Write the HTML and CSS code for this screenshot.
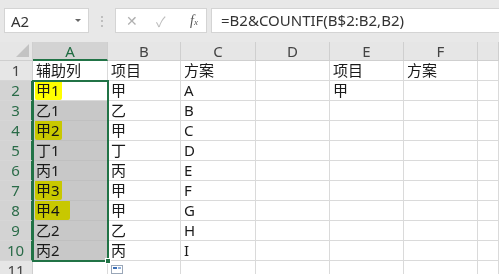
FILE: index.html
```html
<!DOCTYPE html>
<html lang="zh-CN">
<head>
  <meta charset="UTF-8">
  <title>Excel - 辅助列</title>
  <link rel="stylesheet" href="styles.css">
</head>
<body>
  <!-- Formula Bar -->
  <div class="toolbar">
    <div class="name-box">
      <span>A2</span>
      <span class="caret"></span>
    </div>
    <div class="grip">⋮</div>
    <div class="fx-buttons">
      <span class="btn-x">✕</span>
      <span class="btn-ok">✓</span>
      <span class="btn-fx"><i>f</i><small>x</small></span>
    </div>
    <div class="formula">=B2&amp;COUNTIF(B$2:B2,B2)</div>
  </div>

  <!-- Sheet -->
  <div class="sheet">
    <div class="grid">
      <div class="corner"><span class="corner-tri"></span></div>
      <div class="col-head active">A</div>
      <div class="col-head">B</div>
      <div class="col-head">C</div>
      <div class="col-head">D</div>
      <div class="col-head">E</div>
      <div class="col-head">F</div>
      <div class="col-head"></div>

      <div class="row-head">1</div>
      <div class="cell">辅助列</div>
      <div class="cell">项目</div>
      <div class="cell">方案</div>
      <div class="cell"></div>
      <div class="cell">项目</div>
      <div class="cell">方案</div>
      <div class="cell"></div>

      <div class="row-head sel">2</div>
      <div class="cell"><span class="mark">甲1</span></div>
      <div class="cell">甲</div>
      <div class="cell">A</div>
      <div class="cell"></div>
      <div class="cell">甲</div>
      <div class="cell"></div>
      <div class="cell"></div>

      <div class="row-head sel">3</div>
      <div class="cell picked">乙1</div>
      <div class="cell">乙</div>
      <div class="cell">B</div>
      <div class="cell"></div>
      <div class="cell"></div>
      <div class="cell"></div>
      <div class="cell"></div>

      <div class="row-head sel">4</div>
      <div class="cell picked"><span class="mark">甲2</span></div>
      <div class="cell">甲</div>
      <div class="cell">C</div>
      <div class="cell"></div>
      <div class="cell"></div>
      <div class="cell"></div>
      <div class="cell"></div>

      <div class="row-head sel">5</div>
      <div class="cell picked">丁1</div>
      <div class="cell">丁</div>
      <div class="cell">D</div>
      <div class="cell"></div>
      <div class="cell"></div>
      <div class="cell"></div>
      <div class="cell"></div>

      <div class="row-head sel">6</div>
      <div class="cell picked">丙1</div>
      <div class="cell">丙</div>
      <div class="cell">E</div>
      <div class="cell"></div>
      <div class="cell"></div>
      <div class="cell"></div>
      <div class="cell"></div>

      <div class="row-head sel">7</div>
      <div class="cell picked"><span class="mark">甲3</span></div>
      <div class="cell">甲</div>
      <div class="cell">F</div>
      <div class="cell"></div>
      <div class="cell"></div>
      <div class="cell"></div>
      <div class="cell"></div>

      <div class="row-head sel">8</div>
      <div class="cell picked"><span class="mark wide">甲4</span></div>
      <div class="cell">甲</div>
      <div class="cell">G</div>
      <div class="cell"></div>
      <div class="cell"></div>
      <div class="cell"></div>
      <div class="cell"></div>

      <div class="row-head sel">9</div>
      <div class="cell picked">乙2</div>
      <div class="cell">乙</div>
      <div class="cell">H</div>
      <div class="cell"></div>
      <div class="cell"></div>
      <div class="cell"></div>
      <div class="cell"></div>

      <div class="row-head sel">10</div>
      <div class="cell picked">丙2</div>
      <div class="cell">丙</div>
      <div class="cell">I</div>
      <div class="cell"></div>
      <div class="cell"></div>
      <div class="cell"></div>
      <div class="cell"></div>

      <div class="row-head">11</div>
      <div class="cell"></div>
      <div class="cell"></div>
      <div class="cell"></div>
      <div class="cell"></div>
      <div class="cell"></div>
      <div class="cell"></div>
      <div class="cell"></div>
    </div>

    <!-- Selection A2:A10 -->
    <div class="selection"><span class="handle"></span></div>
    <div class="quick">
      <svg width="12" height="9" viewBox="0 0 12 9">
        <rect x="0.5" y="0.5" width="11" height="8" fill="#fff" stroke="#9aa7b8"/>
        <rect x="2" y="2" width="4" height="2" fill="#3d6fb6"/>
        <rect x="7" y="2" width="3" height="2" fill="#8fb0dc"/>
      </svg>
    </div>
  </div>
</body>
</html>
```

FILE: styles.css
```css
* {
  margin: 0;
  padding: 0;
  box-sizing: border-box;
}

body {
  font-family: "Noto Sans", "Noto Sans CJK SC", sans-serif;
  background: #e6e6e6;
  color: #222;
  overflow: hidden;
  width: 499px;
  height: 274px;
}

/* Formula Bar */
.toolbar {
  height: 42px;
  display: flex;
  align-items: flex-start;
  padding: 8px 0 0 4px;
  background: #e8e8e8;
}

.name-box {
  width: 85px;
  height: 25px;
  background: #fff;
  border: 1px solid #d4d4d4;
  display: flex;
  align-items: center;
  justify-content: space-between;
  padding: 0 7px 0 6px;
  font-size: 15px;
  color: #333;
}

.caret {
  width: 0;
  height: 0;
  border-left: 3px solid transparent;
  border-right: 3px solid transparent;
  border-top: 3px solid #666;
}

.grip {
  width: 26px;
  text-align: center;
  color: #a8a8a8;
  font-size: 12px;
  line-height: 25px;
}

.fx-buttons {
  width: 92px;
  height: 25px;
  background: #fff;
  border: 1px solid #d4d4d4;
  display: flex;
  align-items: center;
  padding: 0 8px 0 10px;
  gap: 0;
  color: #b0b0b0;
  font-size: 14px;
}

.btn-x {
  width: 30px;
}

.btn-ok {
  width: 30px;
  color: #bdbdbd;
}

.btn-fx {
  color: #555;
  font-family: "Liberation Serif", serif;
  font-size: 14px;
  margin-left: auto;
}

.btn-fx small {
  font-size: 9px;
  font-style: italic;
}

.formula {
  flex: 1;
  height: 25px;
  margin-left: 4px;
  background: #fff;
  border: 1px solid #d4d4d4;
  border-right: none;
  padding-left: 9px;
  font-size: 15px;
  line-height: 23px;
  color: #333;
  white-space: nowrap;
}

/* Sheet */
.sheet {
  position: relative;
  background: #fff;
}

.grid {
  display: grid;
  grid-template-columns: 33px 75px 73px 75px 74px 74px 74px 1fr;
  grid-template-rows: 19px repeat(11, 20px);
}

.corner {
  background: #e6e6e6;
  border-right: 1px solid #cfcfcf;
  border-bottom: 1px solid #cfcfcf;
  position: relative;
}

.corner-tri {
  position: absolute;
  right: 3px;
  bottom: 3px;
  width: 0;
  height: 0;
  border-left: 13px solid transparent;
  border-bottom: 13px solid #c3c3c3;
}

.col-head {
  background: #e6e6e6;
  border-right: 1px solid #cfcfcf;
  border-bottom: 1px solid #cfcfcf;
  text-align: center;
  font-size: 15px;
  line-height: 18px;
  color: #444;
}

.col-head.active {
  background: #d3d3d3;
  color: #1e6b41;
  border-bottom: 2px solid #217346;
}

.row-head {
  background: #e6e6e6;
  border-right: 1px solid #cfcfcf;
  border-bottom: 1px solid #d6d6d6;
  text-align: center;
  font-size: 15px;
  line-height: 19px;
  color: #444;
}

.row-head.sel {
  background: #d3d3d3;
  color: #2a6b48;
  border-right: 2px solid #217346;
}

.cell {
  border-right: 1px solid #dadada;
  border-bottom: 1px solid #dadada;
  padding-left: 3px;
  font-size: 15px;
  line-height: 19px;
  color: #1a1a1a;
  white-space: nowrap;
  overflow: hidden;
}

.cell.picked {
  background: #c8c8c8;
  border-right-color: #c0c0c0;
  border-bottom-color: #c0c0c0;
}

.mark {
  background: #ffff00;
  mix-blend-mode: multiply;
  padding: 0 2px 0 1px;
  margin-left: -1px;
  border-radius: 2px;
}

.mark.wide {
  padding-right: 10px;
}

/* Selection Overlay */
.selection {
  position: absolute;
  left: 32px;
  top: 38px;
  width: 77px;
  height: 182px;
  border: 2px solid #217346;
  pointer-events: none;
}

.handle {
  position: absolute;
  right: -4px;
  bottom: -4px;
  width: 6px;
  height: 6px;
  background: #217346;
  border: 1px solid #fff;
}

.quick {
  position: absolute;
  left: 111px;
  top: 223px;
  line-height: 0;
}
```
